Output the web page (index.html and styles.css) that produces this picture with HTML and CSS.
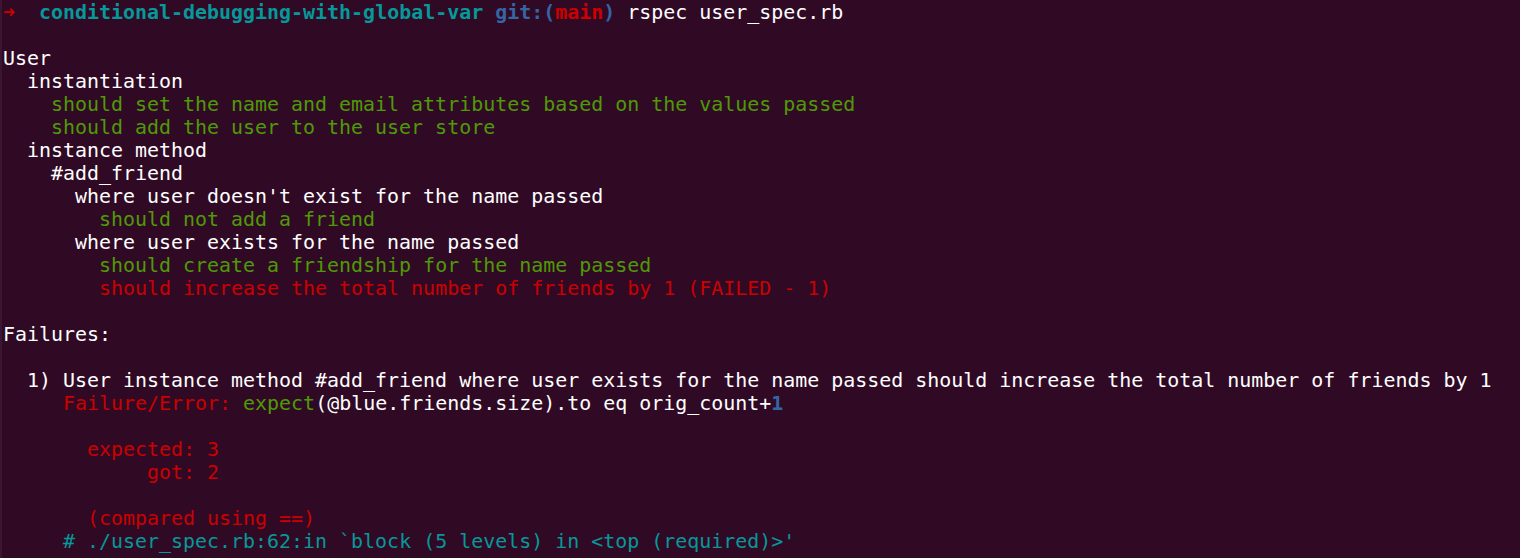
FILE: index.html
```html
<!DOCTYPE html>
<html>
<head>
<meta charset="utf-8">
<link rel="stylesheet" href="styles.css">
</head>
<body>
<main class="term">
<pre class="out"><span class="r b">➜</span>  <span class="c b">conditional-debugging-with-global-var</span> <span class="bl b">git:(</span><span class="r b">main</span><span class="bl b">)</span> rspec user_spec.rb

User
  instantiation
    <span class="g">should set the name and email attributes based on the values passed</span>
    <span class="g">should add the user to the user store</span>
  instance method
    #add_friend
      where user doesn't exist for the name passed
        <span class="g">should not add a friend</span>
      where user exists for the name passed
        <span class="g">should create a friendship for the name passed</span>
        <span class="r">should increase the total number of friends by 1 (FAILED - 1)</span>

Failures:

  1) User instance method #add_friend where user exists for the name passed should increase the total number of friends by 1
     <span class="r">Failure/Error: </span><span class="g">expect</span>(@blue.friends.size).to eq orig_count+<span class="bl b">1</span>

       <span class="r">expected: 3</span>
       <span class="r">     got: 2</span>

       <span class="r">(compared using ==)</span>
     <span class="c"># ./user_spec.rb:62:in `block (5 levels) in &lt;top (required)&gt;'</span>
</pre>
</main>
</body>
</html>
```
FILE: styles.css
```css
html, body {
  margin: 0;
  padding: 0;
  background: #300a24;
  height: 100%;
  overflow: hidden;
}
.term {
  height: 100%;
  border-left: 2px solid #3b1631;
  box-sizing: border-box;
  padding-left: 1px;
  padding-top: 1px;
}
.out {
  margin: 0;
  font-family: "DejaVu Sans Mono", monospace;
  font-size: 19.95px;
  line-height: 23px;
  color: #ffffff;
  white-space: pre;
}
.b { font-weight: bold; }
.r { color: #cc0000; }
.g { color: #4e9a06; }
.c { color: #06989a; }
.bl { color: #3465a4; }
```
